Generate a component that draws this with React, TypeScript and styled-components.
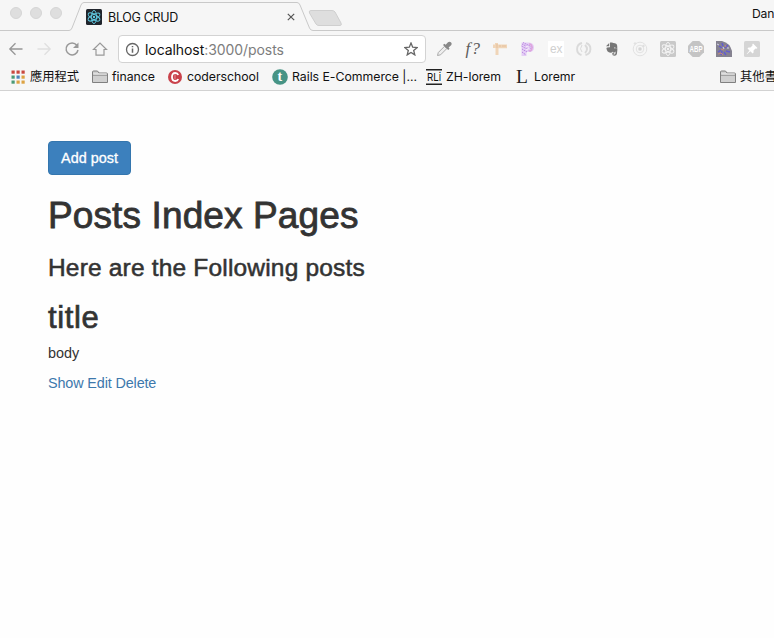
import React from 'react';
import styled, { createGlobalStyle } from 'styled-components';

const Global = createGlobalStyle`
  * { box-sizing: border-box; }
  html, body { margin: 0; padding: 0; background: #fefefe; overflow: hidden; }
  svg { display: block; flex: none; }
`;

const Window = styled.div`
  width: 774px;
  height: 638px;
  overflow: hidden;
  background: #fefefe;
  font-family: Inter, "Noto Sans CJK TC", sans-serif;
  color: #111;
`;

const TabStrip = styled.header`
  position: relative;
  display: flex;
  height: 31px;
  background: #f6f6f6;
`;

const TabOutline = styled.svg`
  position: absolute;
  inset: 0;
`;

const WindowButtons = styled.div`
  position: relative;
  display: flex;
  gap: 8px;
  padding: 7px 0 0 10px;
  width: 86px;
`;

const WindowButton = styled.i`
  width: 12px;
  height: 12px;
  border-radius: 50%;
  background: #dedede;
  border: 1px solid #d5d5d5;
`;

const Tab = styled.div`
  position: relative;
  display: flex;
  align-items: center;
  width: 209px;
  height: 16px;
  margin-top: 9px;
  font-size: 12.5px;
`;

const TabTitle = styled.span`
  flex: 1;
  padding-left: 6px;
  white-space: nowrap;
  letter-spacing: -0.3px;
`;

const Profile = styled.span`
  position: relative;
  margin: 6px 0 0 auto;
  width: 22px;
  font-size: 12.2px;
  letter-spacing: -0.2px;
  line-height: 16px;
  white-space: nowrap;
`;

const Toolbar = styled.nav`
  display: flex;
  align-items: center;
  height: 36px;
  padding: 0 14px 0 8px;
  background: #f6f6f6;
`;

const NavButtons = styled.div`
  display: flex;
  gap: 12px;
  width: 110px;
`;

const Address = styled.div`
  display: flex;
  align-items: center;
  width: 308px;
  height: 28px;
  padding: 0 7px 0 6px;
  border: 1px solid #d3d3d3;
  border-radius: 4px;
  background: #fff;
`;

const Url = styled.span`
  flex: 1;
  padding-left: 5px;
  font-size: 14px;
  letter-spacing: -0.07px;
  white-space: nowrap;
  color: #7d7d7d;
  b { font-weight: 400; color: #111; }
`;

const Extensions = styled.div`
  display: flex;
  gap: 12px;
  margin-left: 10px;
`;

const FunctionIcon = styled.svg`
  overflow: visible;
`;

const Bookmarks = styled.div`
  display: flex;
  align-items: center;
  height: 24px;
  padding: 0 0 4px 10px;
  background: #f6f6f6;
  border-bottom: 1px solid #d2d2d2;
`;

const Bookmark = styled.a<{ $width: number; $gap?: number; $push?: boolean }>`
  display: flex;
  align-items: center;
  flex: none;
  gap: ${p => p.$gap ?? 4}px;
  width: ${p => p.$width}px;
  margin-left: ${p => (p.$push ? 'auto' : 0)};
  font-size: 12.3px;
  line-height: 16px;
  letter-spacing: -0.03px;
  white-space: nowrap;
  svg { overflow: visible; }
`;

const Content = styled.main`
  display: flex;
  flex-direction: column;
  align-items: flex-start;
  padding: 50px 48px;
  font-family: "Liberation Sans", Arial, sans-serif;
  color: #333;
`;

const AddButton = styled.button`
  width: 83px;
  height: 34px;
  padding: 0;
  border: 1px solid #3476ae;
  border-radius: 4px;
  background: #3c80bd;
  color: #fff;
  font: 14.4px "Liberation Sans", Arial, sans-serif;
  -webkit-text-stroke: 0.3px #fff;
`;

const Heading = styled.h1<{ $size: number; $top: number; $spacing?: number }>`
  margin: ${p => p.$top}px 0 0;
  font-size: ${p => p.$size}px;
  line-height: 1.1;
  font-weight: 400;
  letter-spacing: ${p => p.$spacing ?? 0}px;
  -webkit-text-stroke: ${p => p.$size / 45}px #333;
  white-space: nowrap;
`;

const Body = styled.p`
  margin: 8px 0 0;
  font-size: 14.4px;
  line-height: 20px;
`;

const Links = styled.div`
  display: flex;
  gap: 4px;
  margin-top: 10px;
  font-size: 14.4px;
  line-height: 20px;
  letter-spacing: -0.16px;
  a { color: #3d78ac; }
`;

const Atom = ({ color, bg }: { color: string; bg: string }) => (
  <svg width="16" height="16" viewBox="0 0 16 16" fill="none" stroke={color}>
    <rect width="16" height="16" rx="1.5" fill={bg} stroke="none" />
    {[30, 90, 150].map(a => (
      <ellipse key={a} cx="8" cy="8" rx="6.6" ry="2.6" transform={`rotate(${a} 8 8)`} strokeWidth=".9" />
    ))}
    <circle cx="8" cy="8" r="1.2" fill={color} stroke="none" />
  </svg>
);

const Folder = () => (
  <svg width="16" height="14" viewBox="0 0 16 14">
    <path d="M.5 12.5V2Q.5 1 1.5 1h4l1.5 2h7.5q1 0 1 1v8.5z" fill="#d0d0d0" stroke="#808080" />
    <path d="M1 5.2h14" stroke="#8d8d8d" />
    <path d="M1.4 4h13.2" stroke="#eee" />
  </svg>
);

const appColors = ['#c9483f', '#c9483f', '#c9483f', '#4a9a77', '#4b84bd', '#dda343', '#4a9a77', '#dda343', '#dda343'];

const AppsGrid = () => (
  <svg width="15" height="14" viewBox="0 0 15 14">
    {appColors.map((c, i) => (
      <rect key={i} x={1.5 + (i % 3) * 5} y={0.5 + Math.floor(i / 3) * 5} width="3.2" height="3.2" fill={c} />
    ))}
  </svg>
);

const letterFont = { serif: '"Liberation Serif", serif', sans: '"Liberation Sans", sans-serif' };

export default function App() {
  return (
    <Window>
      <Global />
      <TabStrip>
        <TabOutline width="774" height="31" fill="none" stroke="#c9c9c9">
          <path d="M0 30.5H69Q71 30.5 72 28L81 5Q82 2.5 84 2.5H297Q299 2.5 300 5L309.5 28Q310.5 30.5 313 30.5H774" />
          <path d="M311 10.5H332Q334 10.5 335 12L341 23Q342 25.5 340 25.5H319Q317 25.5 316 24L309.5 13Q308.5 10.5 311 10.5Z" fill="#dedede" stroke="#cfcfcf" />
        </TabOutline>
        <WindowButtons><WindowButton /><WindowButton /><WindowButton /></WindowButtons>
        <Tab>
          <Atom color="#62cbe3" bg="#20252c" />
          <TabTitle>BLOG CRUD</TabTitle>
          <svg width="8" height="8" viewBox="0 0 8 8" stroke="#555" strokeWidth="1.2"><path d="M.8.8l6.4 6.4M7.2.8L.8 7.2" /></svg>
        </Tab>
        <Profile>Dan</Profile>
      </TabStrip>

      <Toolbar>
        <NavButtons>
          <svg width="16" height="16" viewBox="0 0 16 16" fill="none" stroke="#969696" strokeWidth="1.3"><path d="M14.500 8H2M7.500 2.300L1.800 8l5.700 5.700" /></svg>
          <svg width="16" height="16" viewBox="0 0 16 16" fill="none" stroke="#dfdfdf" strokeWidth="1.3"><path d="M1.500 8H14M8.500 2.300L14.200 8l-5.700 5.700" /></svg>
          <svg width="16" height="16" viewBox="0 0 16 16" fill="none" stroke="#999" strokeWidth="1.5"><path d="M12.800 4.200A6 6 0 1 0 14 9" /><path d="M14.500 1.500v5.500H9z" fill="#999" stroke="none" /></svg>
          <svg width="16" height="16" viewBox="0 0 16 16" fill="none" stroke="#999" strokeWidth="1.2"><path d="M1.500 8.500L8 2l6.500 6.500H12v5.700H4V8.500z" /></svg>
        </NavButtons>
        <Address>
          <svg width="15" height="15" viewBox="0 0 15 15" fill="none" stroke="#666" strokeWidth="1.3"><circle cx="7.500" cy="7.500" r="6" /><path d="M7.500 6.500v4.300M7.500 4v1.300" strokeWidth="1.5" /></svg>
          <Url><b>localhost</b>:3000/posts</Url>
          <svg width="14" height="14" viewBox="0 0 14 14" fill="none" stroke="#666" strokeWidth="1.3"><path d="M7 1l1.700 4.200 4.500.3-3.500 2.900 1.100 4.500L7 10.500l-3.800 2.400 1.100-4.500L.8 5.500l4.500-.3z" /></svg>
        </Address>
        <Extensions>
          <svg width="16" height="16" viewBox="0 0 16 16"><path d="M1.500 14.500l.8-3L8.500 5.300l2.300 2.300L4.600 13.800z" fill="#eee" stroke="#aaa" /><path d="M7 4l1.300-1.200 1.400 1L12 1.200q1.500-1 2.900.1t.2 3L12.600 6.500l1 1.300L12.200 9z" fill="#888" /></svg>
          <FunctionIcon width="16" height="16" viewBox="0 0 16 16"><text x="1.500" y="12.500" fontFamily={letterFont.serif} fontStyle="italic" fontSize="17" textLength="14.500" fill="#5c5c5c">f?</text></FunctionIcon>
          <svg width="16" height="16" viewBox="0 0 16 16" fill="#f0d5b8"><path d="M1 3.500h2V2h3v1.500h9v3.800H6.500V14h-3V7H1z" /><path d="M5 3v4M8 4v2M11 4v2M13 4v2" stroke="#dfb98f" strokeWidth=".7" /></svg>
          <svg width="16" height="16" viewBox="0 0 16 16" fill="none"><path d="M1.500 1.500H9Q14 2 14 6.500T9 11H6.500v4h-5z" fill="#e4cef5" /><path d="M2 3l10 5M3 1.500l10 5M1.500 5l9 5M2 8l5 3M2 11l4 3" stroke="#b47edf" strokeWidth=".9" strokeDasharray="1.500 .8" /><path d="M9 3q3 0 3 3.500t-3 3.500" stroke="#dfa5dd" strokeWidth="1.500" /><path d="M6 5.500q3-1 3 1.500T6 8.500" stroke="#f5e8fa" /></svg>
          <svg width="16" height="16" viewBox="0 0 16 16"><rect width="16" height="16" fill="#fff" /><text x="2" y="11.500" fontFamily={letterFont.sans} fontSize="12" textLength="12.500" lengthAdjust="spacingAndGlyphs" fill="#d0d0d0">ex</text></svg>
          <svg width="16" height="16" viewBox="0 0 16 16" fill="none" stroke="#dadada" strokeWidth="1.900"><path d="M6 2A6.200 6.200 0 0 0 5.500 14M10 2A6.200 6.200 0 0 1 9.500 14M9 4q4 4 0 8" /><path d="M6 4Q3 8 6 11" strokeWidth="1" /></svg>
          <svg width="16" height="16" viewBox="0 0 16 16" fill="#777"><path d="M2 5.200L5.200 2v3.200zM6 1.500h2q1 .7 3 .8 2 .2 2.200 2.500.5 5-.3 8.200-.4 1.800-2.500 1.700-2.200-.1-2.200-2 0-1.700 2.200-1.500v1.300q-1 0-1 .5 0 .7 1 .6 1.300-.1 1.200-3-1 1-3 .2-.2 1-2.200 1-3.500-.2-4-4.700 0-1 3.600-.9z" /><path d="M10 7q1.500-.8 2 .5" fill="none" stroke="#f6f6f6" strokeWidth=".7" /></svg>
          <svg width="16" height="16" viewBox="0 0 16 16" fill="none" stroke="#e2e2e2"><circle cx="8" cy="8" r="6.800" /><circle cx="8" cy="8" r="3.800" /><circle cx="8" cy="8" r="1.600" fill="#d5d5d5" /><circle cx="3" cy="2.500" r=".8" fill="#ddd" /><circle cx="11.500" cy="5" r=".8" fill="#ccc" /></svg>
          <Atom color="#f4f4f4" bg="#c9c9c9" />
          <svg width="16" height="16" viewBox="0 0 16 16"><path d="M4.700 0h6.600L16 4.700v6.600L11.300 16H4.700L0 11.300V4.700z" fill="#c4c4c4" /><text x="1.500" y="11" fontFamily={letterFont.sans} fontWeight="700" fontSize="8.500" textLength="13" lengthAdjust="spacingAndGlyphs" fill="#fff">ABP</text></svg>
          <svg width="16" height="16" viewBox="0 0 16 16"><path d="M0 0h6q8 2 10 10v6H0z" fill="#858290" /><path d="M2 11l3-2M5 14l1-4M9 7l3-3M10 10l4 1M8 11l2 3M3 5l3 2M6 2l1 3" stroke="#625bd0" strokeWidth="1.500" /><path d="M2 13l3-1 2 2M9 4l1 2M5 8l3 1" stroke="#c48680" fill="none" /><path d="M1 3l2 1M11 7l2 0M7 6l1 2" stroke="#d4d2ed" /></svg>
          <svg width="16" height="16" viewBox="0 0 16 16"><rect width="16" height="16" rx="1.500" fill="#d5d5d5" /><path d="M9 2.500l4.500 4.500-1 .7-1-.2-2 2 .1 2-1 1-2.300-2.300L3 13.200l-.3-.3L5.500 9.500 3.500 7.500l1-1 2 .1 2-2-.2-1z" fill="#fff" /></svg>
        </Extensions>
      </Toolbar>

      <Bookmarks>
        <Bookmark $width={82} $gap={5}><AppsGrid />應用程式</Bookmark>
        <Bookmark $width={75}><Folder />finance</Bookmark>
        <Bookmark $width={105}>
          <svg width="16" height="16" viewBox="0 0 16 16"><circle cx="8" cy="8" r="7" fill="#c9424b" /><path d="M11.200 6Q10.500 4 8.300 4 5 4 5 8t3.300 4q2.200 0 2.900-2" fill="none" stroke="#fff" strokeWidth="1.800" /><path d="M8 5.500v5" stroke="#e7a3a8" strokeWidth=".8" /></svg>
          coderschool
        </Bookmark>
        <Bookmark $width={154}>
          <svg width="16" height="16" viewBox="0 0 16 16"><circle cx="8" cy="8" r="7.800" fill="#479485" /><text x="5.500" y="12" fontFamily={letterFont.serif} fontWeight="700" fontSize="14" fill="#fff">t</text></svg>
          Rails E-Commerce |...
        </Bookmark>
        <Bookmark $width={88}>
          <svg width="16" height="16" viewBox="0 0 16 16"><path d="M0 .8h16M0 15.200h16" stroke="#222" strokeWidth="1.500" /><text x="1" y="12" fontFamily="Inter, sans-serif" fontSize="11" textLength="14" lengthAdjust="spacingAndGlyphs" fill="#111">RLi</text></svg>
          ZH-lorem
        </Bookmark>
        <Bookmark $width={65}>
          <svg width="16" height="16" viewBox="0 0 16 16"><text x="2" y="14" fontFamily={letterFont.serif} fontSize="19.500" fill="#222">L</text></svg>
          Loremr
        </Bookmark>
        <Bookmark $width={54} $push><Folder />其他書籤</Bookmark>
      </Bookmarks>

      <Content>
        <AddButton>Add post</AddButton>
        <Heading $size={37} $top={21} $spacing={0.12}>Posts Index Pages</Heading>
        <Heading as="h3" $size={24.5} $top={18} $spacing={0.18}>Here are the Following posts</Heading>
        <Heading as="h2" $size={31} $top={19} $spacing={0.6}>title</Heading>
        <Body>body</Body>
        <Links><a>Show</a><a>Edit</a><a>Delete</a></Links>
      </Content>
    </Window>
  );
}
